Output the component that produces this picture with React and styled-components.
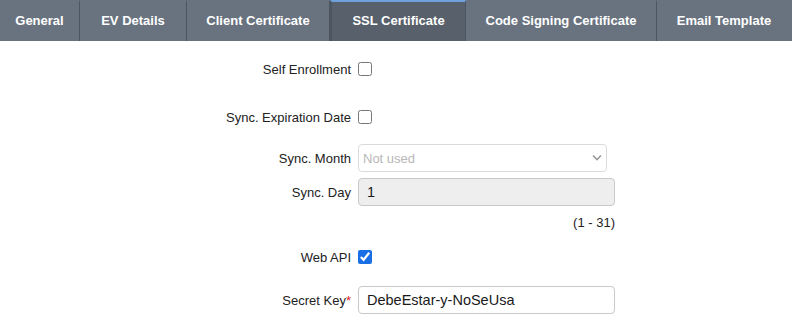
import React from "react";
import styled, { createGlobalStyle } from "styled-components";

const Global = createGlobalStyle`
  body {
    margin: 0;
    background: #ffffff;
    font-family: "Liberation Sans", Arial, sans-serif;
    color: #222222;
  }
`;

const TabBar = styled.div`
  display: flex;
  height: 41px;
  background: #69737f;
`;

const Tab = styled.div`
  width: ${(p) => p.w}px;
  flex: none;
  box-sizing: border-box;
  display: flex;
  align-items: center;
  justify-content: center;
  font-size: 13px;
  font-weight: bold;
  color: #ffffff;
  background: ${(p) => (p.active ? "#58616b" : "#69737f")};
  border-right: 1px solid ${(p) => (p.last ? "transparent" : "#4c5661")};
  border-left: ${(p) => (p.active ? "2px solid #4c5661" : "none")};
  border-top: 2px solid ${(p) => (p.active ? "#6fa0dc" : "transparent")};
  padding-bottom: 2px;
`;

const Form = styled.div`
  display: flex;
  flex-direction: column;
`;

const Row = styled.div`
  display: flex;
  align-items: center;
  height: ${(p) => p.h || 28}px;
  margin-top: ${(p) => p.mt}px;
`;

const Label = styled.label`
  width: 351px;
  flex: none;
  text-align: right;
  padding-right: 7px;
  font-size: 13px;
  color: #222222;
`;

const Req = styled.span`
  color: #d9201f;
`;

const Check = styled.input`
  width: 14px;
  height: 14px;
  margin: 0;
  accent-color: #1a6ee6;
`;

const SelectWrap = styled.div`
  position: relative;
  width: 249px;
  height: 28px;
`;

const Select = styled.select`
  appearance: none;
  width: 100%;
  height: 100%;
  box-sizing: border-box;
  border: 1px solid #cccccc;
  border-radius: 4px;
  background: #ffffff;
  padding: 0 4px;
  font-family: inherit;
  font-size: 13px;
  color: #999999;
`;

const Chevron = styled.svg`
  position: absolute;
  right: 5px;
  top: 10px;
  pointer-events: none;
`;

const TextInput = styled.input`
  width: 257px;
  height: ${(p) => p.h || 28}px;
  box-sizing: border-box;
  border: 1px solid #c9c9c9;
  border-radius: 4px;
  background: ${(p) => (p.readOnly ? "#eeeeee" : "#ffffff")};
  padding: 0 8px;
  font-family: inherit;
  font-size: 14.5px;
  color: #1a1a1a;
  outline: none;
`;

const Hint = styled.div`
  width: 615px;
  text-align: right;
  font-size: 13px;
  color: #222222;
`;

const tabs = [
  { name: "General", w: 80 },
  { name: "EV Details", w: 107 },
  { name: "Client Certificate", w: 143 },
  { name: "SSL Certificate", w: 136, active: true },
  { name: "Code Signing Certificate", w: 191 },
  { name: "Email Template", w: 135, last: true },
];

export default function App() {
  return (
    <>
      <Global />
      <TabBar>
        {tabs.map((t) => (
          <Tab key={t.name} w={t.w} active={t.active} last={t.last}>
            {t.name}
          </Tab>
        ))}
      </TabBar>
      <Form>
        <Row mt={14}>
          <Label>Self Enrollment</Label>
          <Check type="checkbox" />
        </Row>
        <Row mt={20}>
          <Label>Sync. Expiration Date</Label>
          <Check type="checkbox" />
        </Row>
        <Row mt={13}>
          <Label>Sync. Month</Label>
          <SelectWrap>
            <Select defaultValue="none" disabled>
              <option value="none">Not used</option>
            </Select>
            <Chevron width="10" height="7" viewBox="0 0 10 7">
              <path d="M1 1.5 L5 5.5 L9 1.5" fill="none" stroke="#9a9a9a" strokeWidth="1.6" />
            </Chevron>
          </SelectWrap>
        </Row>
        <Row mt={6} h={28}>
          <Label>Sync. Day</Label>
          <TextInput h={28} defaultValue="1" readOnly />
        </Row>
        <Row mt={8} h={16}>
          <Hint>(1 - 31)</Hint>
        </Row>
        <Row mt={13}>
          <Label>Web API</Label>
          <Check type="checkbox" defaultChecked />
        </Row>
        <Row mt={15}>
          <Label>
            Secret Key<Req>*</Req>
          </Label>
          <TextInput defaultValue="DebeEstar-y-NoSeUsa" />
        </Row>
      </Form>
    </>
  );
}
